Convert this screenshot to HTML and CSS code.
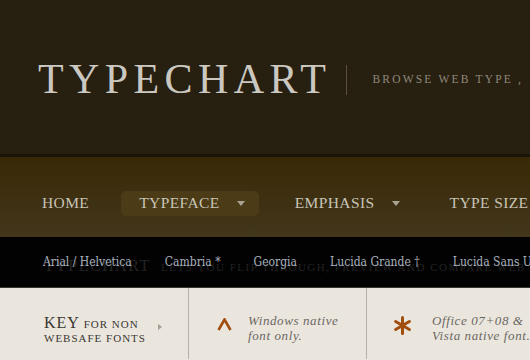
FILE: index.html
```html
<!DOCTYPE html>
<html lang="en">
<head>
  <meta charset="UTF-8" />
  <title>Typechart</title>
  <link rel="stylesheet" href="styles.css">
</head>
<body>
  <div class="header">
    <h1 class="logo">TYPECHART</h1>
    <div class="divider"></div>
    <div class="tagline">BROWSE WEB TYPE ,</div>
  </div>

  <div class="nav">
    <a class="nav-item">HOME</a>
    <a class="nav-item active">TYPEFACE <span class="arrow"></span></a>
    <a class="nav-item">EMPHASIS <span class="arrow"></span></a>
    <a class="nav-item">TYPE SIZE</a>
  </div>

  <div class="fonts">
    <div class="intro"><span class="big">TYPECHART</span> LETS YOU FLIP THROUGH, PREVIEW AND COMPARE WEB TYPE</div>
    <ul class="font-list">
      <li>Arial / Helvetica</li>
      <li>Cambria *</li>
      <li>Georgia</li>
      <li>Lucida Grande †</li>
      <li>Lucida Sans Unicode</li>
    </ul>
  </div>

  <div class="key">
    <div class="key-col key-title">
      <div class="key-text"><span class="big">KEY</span> FOR NON<br>WEBSAFE FONTS</div>
      <span class="key-arrow"></span>
    </div>
    <div class="key-col">
      <svg class="mark" width="15" height="13" viewBox="0 0 15 13">
        <polyline points="1.5,12 7.5,1.5 13.5,12" fill="none" stroke="#a14d0e" stroke-width="2.6" stroke-linejoin="miter"/>
      </svg>
      <p>Windows native<br>font only.</p>
    </div>
    <div class="key-col">
      <svg class="mark" width="19" height="19" viewBox="0 0 19 19">
        <g stroke="#a14d0e" stroke-width="3" stroke-linecap="round">
          <line x1="9.5" y1="1.5" x2="9.5" y2="17.5"/>
          <line x1="2.6" y1="5.5" x2="16.4" y2="13.5"/>
          <line x1="2.6" y1="13.5" x2="16.4" y2="5.5"/>
        </g>
      </svg>
      <p>Office 07+08 &amp;<br>Vista native font.</p>
    </div>
  </div>
</body>
</html>
```

FILE: styles.css
```css
body {
  margin: 0;
  width: 530px;
  height: 360px;
  overflow: hidden;
  font-family: "Liberation Serif", serif;
  background-color: #eae6de;
}

.header {
  height: 154px;
  background-color: #271f10;
  border-bottom: 3px solid #1a1408;
  display: flex;
  align-items: center;
  padding-left: 38px;
  white-space: nowrap;
}

.logo {
  margin: 4px 0 0 0;
  font-weight: normal;
  font-size: 42px;
  letter-spacing: 5.4px;
  color: #cbc8c1;
}

.divider {
  width: 1px;
  height: 30px;
  background-color: #5a5040;
  margin: 6px 25px 0 15px;
}

.tagline {
  font-size: 11.5px;
  letter-spacing: 2.2px;
  color: #8f897c;
  margin-top: 4px;
}

.nav {
  height: 80px;
  background: linear-gradient(#392907, #42361b);
  display: flex;
  align-items: center;
  padding-left: 24px;
  gap: 18px;
  white-space: nowrap;
}

.nav-item {
  display: flex;
  align-items: center;
  height: 25px;
  padding: 0 14px 0 18px;
  font-size: 15.5px;
  letter-spacing: 0.4px;
  color: #c8c4b8;
  border-radius: 5px;
  margin-top: 12px;
}

.nav-item.active {
  background-color: #4b3b17;
}

.arrow {
  width: 0;
  height: 0;
  border-left: 4px solid transparent;
  border-right: 4px solid transparent;
  border-top: 5px solid #aaa496;
  margin-left: 17px;
}

.fonts {
  position: relative;
  height: 50px;
  background-color: #020202;
  border-bottom: 1px solid #3b362f;
  overflow: hidden;
}

.intro {
  position: absolute;
  left: 44px;
  top: 20px;
  font-size: 11px;
  letter-spacing: 1.5px;
  color: #232323;
  white-space: nowrap;
}

.intro .big {
  font-size: 16px;
  margin-right: 6px;
}

.font-list {
  position: relative;
  list-style: none;
  margin: 0;
  padding: 18px 0 0 43px;
  display: flex;
  gap: 33px;
  white-space: nowrap;
  font-family: "DejaVu Serif Condensed", "DejaVu Serif", serif;
  font-size: 12px;
  color: #a9b2bf;
}

.key {
  display: flex;
  height: 71px;
  white-space: nowrap;
}

.key-col {
  display: flex;
  flex-shrink: 0;
  align-items: center;
  border-right: 1px solid #b6b1a8;
  padding-top: 8px;
  box-sizing: border-box;
}

.key-col:first-child {
  width: 189px;
  padding-left: 44px;
}

.key-col:nth-child(2) {
  width: 178px;
  padding-left: 28px;
}

.key-col:nth-child(3) {
  padding-left: 26px;
  border-right: none;
}

.key-title {
  font-size: 11px;
  letter-spacing: 1px;
  line-height: 14px;
  color: #3a3631;
}

.key-text {
  margin-top: 5px;
}

.key-title .big {
  font-size: 16px;
}

.key-arrow {
  width: 0;
  height: 0;
  border-top: 3px solid transparent;
  border-bottom: 3px solid transparent;
  border-left: 4px solid #a49e94;
  margin-left: 12px;
  margin-bottom: 2px;
}

.mark {
  flex-shrink: 0;
  margin-bottom: 6px;
}

.key-col:nth-child(2) .mark {
  margin-right: 16px;
}

.key-col:nth-child(3) .mark {
  margin-right: 20px;
  margin-bottom: 4px;
}

.key-col p {
  margin: 0;
  font-style: italic;
  font-size: 13px;
  line-height: 15px;
  letter-spacing: 0.6px;
  color: #6b6761;
}
```
